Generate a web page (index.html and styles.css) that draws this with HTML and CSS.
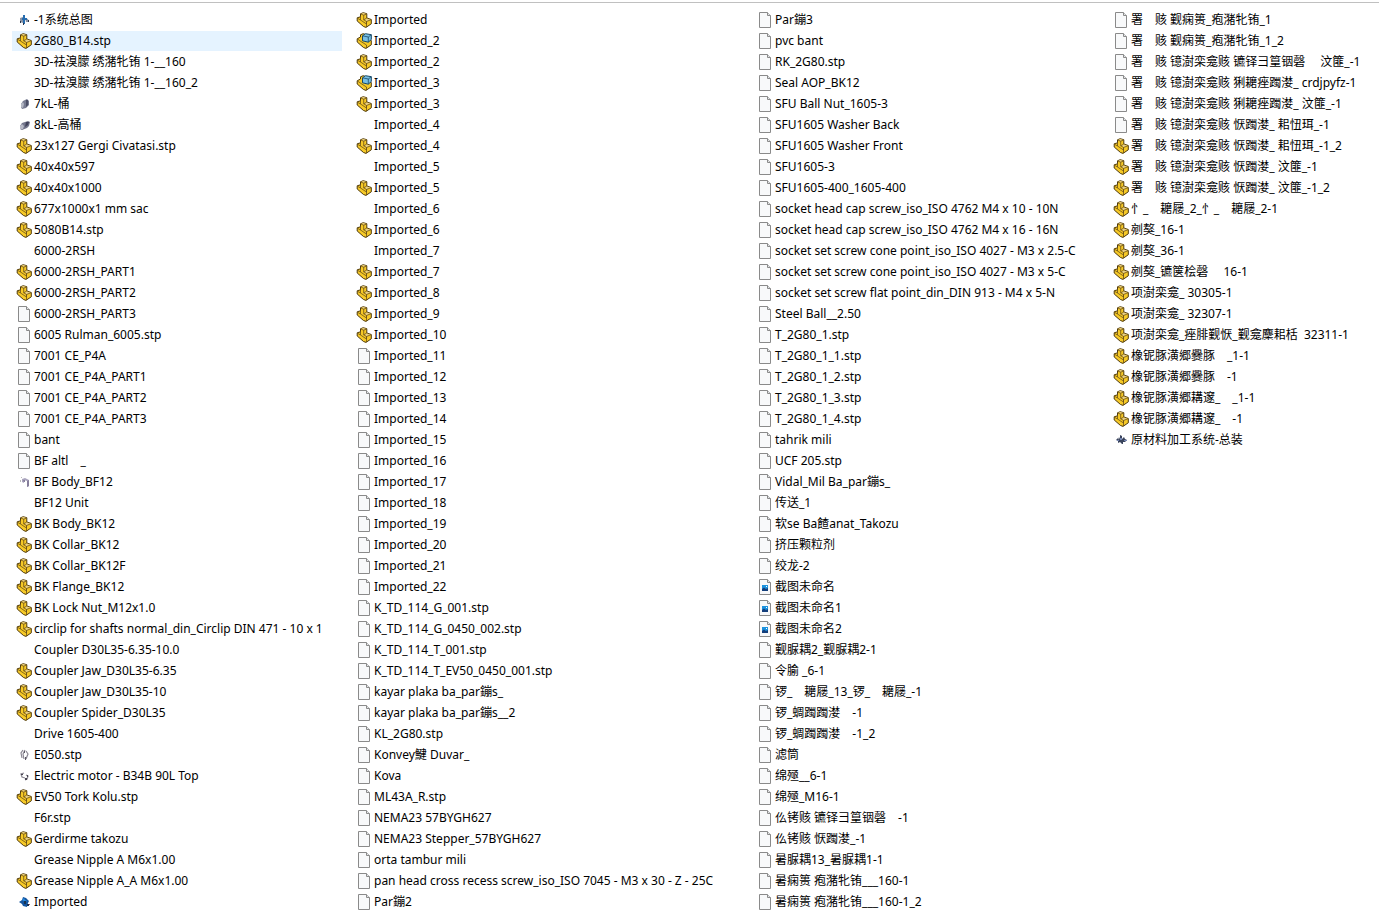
FILE: index.html
```
<!DOCTYPE html>
<html lang="zh-CN">
<head>
    <meta charset="UTF-8">
    <meta name="viewport" content="width=device-width, initial-scale=1.0">
    <title>Files</title>
    <link rel="stylesheet" href="styles.css">
</head>
<body>
    <!-- Icon sprite -->
    <svg class="sprite" aria-hidden="true">
        <symbol id="file" viewBox="0 0 16 16">
            <path d="M2.5 .5H10.500L13.500 3.500V15.500H2.500Z" fill="#f8f9fa" stroke="#8a8a8a"/>
            <path d="M10.500 .5V3.500H13.500" fill="#e4e6e8" stroke="#8a8a8a"/>
        </symbol>
        <symbol id="image" viewBox="0 0 16 16">
            <path d="M2.5 .5H10.500L13.500 3.500V15.500H2.500Z" fill="#f8f9fa" stroke="#8a8a8a"/>
            <path d="M10.500 .5V3.500H13.500" fill="#e4e6e8" stroke="#8a8a8a"/>
            <path d="M5 6H11V12H5Z" fill="#1c93df"/>
            <path d="M5 10L7 8.500L9 10L11 9V12H5Z" fill="#143f7c"/>
            <path d="M9 7H10V8H9Z" fill="#fff"/>
        </symbol>
        <symbol id="part" viewBox="0 0 16 16">
            <path d="M1.200 5.800L4.500 4.800V1.800L7.200 .7L10.800 1.700V6L15.300 7.500V11.800L10 15.400L7.500 14.500L1.200 9Z" fill="#f6c927" stroke="#4f3a0c" stroke-linejoin="round"/>
            <path d="M4.900 1.900L7.300 1.100L10.300 1.900L7.800 2.800ZM8 7.600L10.800 6.500L14.700 7.700L11 9.300Z" fill="#e8cf86"/>
            <path d="M4.500 4.800V8L10.500 12V9.500L7.700 7.800V3.200M10.500 9.500V15M7.700 3.200L4.700 2M7.700 3.200L10.600 2M10.500 9.500L15 7.700M7.700 7.800L10.600 6.200M1.400 6.200L4.500 8" fill="none" stroke="#6b5117" stroke-width=".8"/>
        </symbol>
        <symbol id="body" viewBox="0 0 16 16">
            <path d="M1.200 5.800L4.500 4V1.800L7.200 .7L11 2V6L15.300 7.500V11.800L10 15.400L7.500 14.500L1.200 9Z" fill="#f6c927" stroke="#4f3a0c" stroke-linejoin="round"/>
            <path d="M1.500 6L5 8.500L10.500 12V15" fill="none" stroke="#6b5117" stroke-width=".8"/>
            <path d="M6.500 2.800L9.500 .7L15.300 1.700V6.500L12.300 9.200L6.500 7.800Z" fill="#78bfe4" stroke="#174866" stroke-linejoin="round"/>
            <path d="M6.500 2.800L12.300 4V9M12.300 4L15.300 1.700" fill="none" stroke="#174866" stroke-width=".8"/>
        </symbol>
        <symbol id="assembly" viewBox="0 0 16 16">
            <path d="M4 6L7 5V11L4 10ZM9 6L12 7L13 10L10 10Z" fill="#8a92a2"/>
            <path d="M7 3H9V12H7ZM6 6H11V8H6Z" fill="#266caf"/>
            <path d="M4 9H5V11H4ZM12 8H13V10H12ZM7 11H8V13H7Z" fill="#2b354a"/>
        </symbol>
        <symbol id="plant" viewBox="0 0 16 16">
            <path d="M3 8L5 6V8L6 5L7 7V3L9 4V7L11 5L12 7L14 8L12 10H10V12H9L7 10L5 11V9Z" fill="#39435c"/>
            <path d="M7 6H9V8H7ZM11 8H14V9H11ZM4 8H6V9H4Z" fill="#7485b2"/>
        </symbol>
        <symbol id="barrel" viewBox="0 0 16 16">
            <path d="M5 8L7 5L11 3L13 5V9L10 12L6 13L5 11Z" fill="#777b91"/>
            <path d="M5 8L7 6L8 8L7 12L5 11Z" fill="#b4b8c4"/>
            <path d="M10 4L12 4V9L10 11Z" fill="#4b4e65"/>
        </symbol>
        <symbol id="tank" viewBox="0 0 16 16">
            <path d="M4 9L6 6L12 4L14 5L13 9L11 11L6 13L4 12Z" fill="#73768c"/>
            <path d="M4 9L6 7L8 9L7 12L4 12Z" fill="#b8bac7"/>
            <path d="M10 5L13 5L12 8L9 10Z" fill="#40425a"/>
        </symbol>
        <symbol id="bracket" viewBox="0 0 16 16">
            <path d="M6 5L9 4L13 6V12L11 13V7L8 6V9L6 8Z" fill="#aaa5be"/>
            <path d="M11 7L13 6V12L11 13ZM7 6H9V8H8Z" fill="#857e9b"/>
            <path d="M5 3H6V4H5ZM4 6H5V8H4Z" fill="#bbb"/>
        </symbol>
        <symbol id="ring" viewBox="0 0 16 16">
            <path d="M7 3L5 6L6 11M9 3L7 7L8 12M10 4L12 7L10 12" fill="none" stroke="#8b8793" stroke-width="1.200"/>
            <path d="M8 4H9V6H8ZM9 10H10V13H9Z" fill="#5c5864"/>
        </symbol>
        <symbol id="motor" viewBox="0 0 16 16">
            <path d="M8 5L5 6L6 9L9 10M10 7L12 8L11 11L9 12" fill="none" stroke="#8f8c96" stroke-width="1.300"/>
            <path d="M5 6H7V7H5ZM9 10H11V12H9ZM11 7H12V9H11Z" fill="#484450"/>
        </symbol>
        <symbol id="gear" viewBox="0 0 16 16">
            <path d="M3 8L6 6L7 3L10 4L13 7L12 9L11 13L7 12L6 10Z" fill="#1455a0"/>
            <path d="M6 6L8 4L9 6L11 7L9 8Z" fill="#278ade"/>
            <path d="M8 7H10V10H8ZM11 10H13V12H11Z" fill="#173250"/>
            <path d="M13 10H14V11H13Z" fill="#b65a5a"/>
        </symbol>
    </svg>

    <main class="files">
        <ul class="column">
            <li><svg><use href="#assembly"/></svg>-1系统总图</li>
            <li class="active"><svg><use href="#part"/></svg>2G80_B14.stp</li>
            <li><svg></svg>3D-祛溴朦 绣潴牝铕 1-__160</li>
            <li><svg></svg>3D-祛溴朦 绣潴牝铕 1-__160_2</li>
            <li><svg><use href="#barrel"/></svg>7kL-桶</li>
            <li><svg><use href="#tank"/></svg>8kL-高桶</li>
            <li><svg><use href="#part"/></svg>23x127 Gergi Civatasi.stp</li>
            <li><svg><use href="#part"/></svg>40x40x597</li>
            <li><svg><use href="#part"/></svg>40x40x1000</li>
            <li><svg><use href="#part"/></svg>677x1000x1 mm sac</li>
            <li><svg><use href="#part"/></svg>5080B14.stp</li>
            <li><svg></svg>6000-2RSH</li>
            <li><svg><use href="#part"/></svg>6000-2RSH_PART1</li>
            <li><svg><use href="#part"/></svg>6000-2RSH_PART2</li>
            <li><svg><use href="#file"/></svg>6000-2RSH_PART3</li>
            <li><svg><use href="#file"/></svg>6005 Rulman_6005.stp</li>
            <li><svg><use href="#file"/></svg>7001 CE_P4A</li>
            <li><svg><use href="#file"/></svg>7001 CE_P4A_PART1</li>
            <li><svg><use href="#file"/></svg>7001 CE_P4A_PART2</li>
            <li><svg><use href="#file"/></svg>7001 CE_P4A_PART3</li>
            <li><svg><use href="#file"/></svg>bant</li>
            <li><svg><use href="#file"/></svg>BF altl　_</li>
            <li><svg><use href="#bracket"/></svg>BF Body_BF12</li>
            <li><svg></svg>BF12 Unit</li>
            <li><svg><use href="#part"/></svg>BK Body_BK12</li>
            <li><svg><use href="#part"/></svg>BK Collar_BK12</li>
            <li><svg><use href="#part"/></svg>BK Collar_BK12F</li>
            <li><svg><use href="#part"/></svg>BK Flange_BK12</li>
            <li><svg><use href="#part"/></svg>BK Lock Nut_M12x1.0</li>
            <li><svg><use href="#part"/></svg>circlip for shafts normal_din_Circlip DIN 471 - 10 x 1</li>
            <li><svg></svg>Coupler D30L35-6.35-10.0</li>
            <li><svg><use href="#part"/></svg>Coupler Jaw_D30L35-6.35</li>
            <li><svg><use href="#part"/></svg>Coupler Jaw_D30L35-10</li>
            <li><svg><use href="#part"/></svg>Coupler Spider_D30L35</li>
            <li><svg></svg>Drive 1605-400</li>
            <li><svg><use href="#ring"/></svg>E050.stp</li>
            <li><svg><use href="#motor"/></svg>Electric motor - B34B 90L Top</li>
            <li><svg><use href="#part"/></svg>EV50 Tork Kolu.stp</li>
            <li><svg></svg>F6r.stp</li>
            <li><svg><use href="#part"/></svg>Gerdirme takozu</li>
            <li><svg></svg>Grease Nipple A M6x1.00</li>
            <li><svg><use href="#part"/></svg>Grease Nipple A_A M6x1.00</li>
            <li><svg><use href="#gear"/></svg>Imported</li>
        </ul>

        <ul class="column">
            <li><svg><use href="#part"/></svg>Imported</li>
            <li><svg><use href="#body"/></svg>Imported_2</li>
            <li><svg><use href="#part"/></svg>Imported_2</li>
            <li><svg><use href="#body"/></svg>Imported_3</li>
            <li><svg><use href="#part"/></svg>Imported_3</li>
            <li><svg></svg>Imported_4</li>
            <li><svg><use href="#part"/></svg>Imported_4</li>
            <li><svg></svg>Imported_5</li>
            <li><svg><use href="#part"/></svg>Imported_5</li>
            <li><svg></svg>Imported_6</li>
            <li><svg><use href="#part"/></svg>Imported_6</li>
            <li><svg></svg>Imported_7</li>
            <li><svg><use href="#part"/></svg>Imported_7</li>
            <li><svg><use href="#part"/></svg>Imported_8</li>
            <li><svg><use href="#part"/></svg>Imported_9</li>
            <li><svg><use href="#part"/></svg>Imported_10</li>
            <li><svg><use href="#file"/></svg>Imported_11</li>
            <li><svg><use href="#file"/></svg>Imported_12</li>
            <li><svg><use href="#file"/></svg>Imported_13</li>
            <li><svg><use href="#file"/></svg>Imported_14</li>
            <li><svg><use href="#file"/></svg>Imported_15</li>
            <li><svg><use href="#file"/></svg>Imported_16</li>
            <li><svg><use href="#file"/></svg>Imported_17</li>
            <li><svg><use href="#file"/></svg>Imported_18</li>
            <li><svg><use href="#file"/></svg>Imported_19</li>
            <li><svg><use href="#file"/></svg>Imported_20</li>
            <li><svg><use href="#file"/></svg>Imported_21</li>
            <li><svg><use href="#file"/></svg>Imported_22</li>
            <li><svg><use href="#file"/></svg>K_TD_114_G_001.stp</li>
            <li><svg><use href="#file"/></svg>K_TD_114_G_0450_002.stp</li>
            <li><svg><use href="#file"/></svg>K_TD_114_T_001.stp</li>
            <li><svg><use href="#file"/></svg>K_TD_114_T_EV50_0450_001.stp</li>
            <li><svg><use href="#file"/></svg>kayar plaka ba_par鏰s_</li>
            <li><svg><use href="#file"/></svg>kayar plaka ba_par鏰s__2</li>
            <li><svg><use href="#file"/></svg>KL_2G80.stp</li>
            <li><svg><use href="#file"/></svg>Konvey鰎 Duvar_</li>
            <li><svg><use href="#file"/></svg>Kova</li>
            <li><svg><use href="#file"/></svg>ML43A_R.stp</li>
            <li><svg><use href="#file"/></svg>NEMA23 57BYGH627</li>
            <li><svg><use href="#file"/></svg>NEMA23 Stepper_57BYGH627</li>
            <li><svg><use href="#file"/></svg>orta tambur mili</li>
            <li><svg><use href="#file"/></svg>pan head cross recess screw_iso_ISO 7045 - M3 x 30 - Z - 25C</li>
            <li><svg><use href="#file"/></svg>Par鏰2</li>
        </ul>

        <ul class="column">
            <li><svg><use href="#file"/></svg>Par鏰3</li>
            <li><svg><use href="#file"/></svg>pvc bant</li>
            <li><svg><use href="#file"/></svg>RK_2G80.stp</li>
            <li><svg><use href="#file"/></svg>Seal AOP_BK12</li>
            <li><svg><use href="#file"/></svg>SFU Ball Nut_1605-3</li>
            <li><svg><use href="#file"/></svg>SFU1605 Washer Back</li>
            <li><svg><use href="#file"/></svg>SFU1605 Washer Front</li>
            <li><svg><use href="#file"/></svg>SFU1605-3</li>
            <li><svg><use href="#file"/></svg>SFU1605-400_1605-400</li>
            <li><svg><use href="#file"/></svg>socket head cap screw_iso_ISO 4762 M4 x 10 - 10N</li>
            <li><svg><use href="#file"/></svg>socket head cap screw_iso_ISO 4762 M4 x 16 - 16N</li>
            <li><svg><use href="#file"/></svg>socket set screw cone point_iso_ISO 4027 - M3 x 2.5-C</li>
            <li><svg><use href="#file"/></svg>socket set screw cone point_iso_ISO 4027 - M3 x 5-C</li>
            <li><svg><use href="#file"/></svg>socket set screw flat point_din_DIN 913 - M4 x 5-N</li>
            <li><svg><use href="#file"/></svg>Steel Ball__2.50</li>
            <li><svg><use href="#file"/></svg>T_2G80_1.stp</li>
            <li><svg><use href="#file"/></svg>T_2G80_1_1.stp</li>
            <li><svg><use href="#file"/></svg>T_2G80_1_2.stp</li>
            <li><svg><use href="#file"/></svg>T_2G80_1_3.stp</li>
            <li><svg><use href="#file"/></svg>T_2G80_1_4.stp</li>
            <li><svg><use href="#file"/></svg>tahrik mili</li>
            <li><svg><use href="#file"/></svg>UCF 205.stp</li>
            <li><svg><use href="#file"/></svg>Vidal_Mil Ba_par鏰s_</li>
            <li><svg><use href="#file"/></svg>传送_1</li>
            <li><svg><use href="#file"/></svg>软se Ba餷anat_Takozu</li>
            <li><svg><use href="#file"/></svg>挤压颗粒剂</li>
            <li><svg><use href="#file"/></svg>绞龙-2</li>
            <li><svg><use href="#image"/></svg>截图未命名</li>
            <li><svg><use href="#image"/></svg>截图未命名1</li>
            <li><svg><use href="#image"/></svg>截图未命名2</li>
            <li><svg><use href="#file"/></svg>觐脲耦2_觐脲耦2-1</li>
            <li><svg><use href="#file"/></svg>令腧 _6-1</li>
            <li><svg><use href="#file"/></svg>锣_　耱屦_13_锣_　耱屦_-1</li>
            <li><svg><use href="#file"/></svg>锣_蜩躅躅漤　-1</li>
            <li><svg><use href="#file"/></svg>锣_蜩躅躅漤　-1_2</li>
            <li><svg><use href="#file"/></svg>滤筒</li>
            <li><svg><use href="#file"/></svg>绵殛__6-1</li>
            <li><svg><use href="#file"/></svg>绵殛_M16-1</li>
            <li><svg><use href="#file"/></svg>仫铐赅 镳铎彐篁铟磬　-1</li>
            <li><svg><use href="#file"/></svg>仫铐赅 恹躅漤_-1</li>
            <li><svg><use href="#file"/></svg>暑脲耦13_暑脲耦1-1</li>
            <li><svg><use href="#file"/></svg>暑痫篑 疱潴牝铕___160-1</li>
            <li><svg><use href="#file"/></svg>暑痫篑 疱潴牝铕___160-1_2</li>
        </ul>

        <ul class="column">
            <li><svg><use href="#file"/></svg>署　赅 觐痫篑_疱潴牝铕_1</li>
            <li><svg><use href="#file"/></svg>署　赅 觐痫篑_疱潴牝铕_1_2</li>
            <li><svg><use href="#file"/></svg>署　赅 镱澍栾龛赅 镳铎彐篁铟磬　 汶篚_-1</li>
            <li><svg><use href="#file"/></svg>署　赅 镱澍栾龛赅 猁耱痤躅漤_ crdjpyfz-1</li>
            <li><svg><use href="#file"/></svg>署　赅 镱澍栾龛赅 猁耱痤躅漤_ 汶篚_-1</li>
            <li><svg><use href="#file"/></svg>署　赅 镱澍栾龛赅 恹躅漤_ 耜忸珥_-1</li>
            <li><svg><use href="#part"/></svg>署　赅 镱澍栾龛赅 恹躅漤_ 耜忸珥_-1_2</li>
            <li><svg><use href="#part"/></svg>署　赅 镱澍栾龛赅 恹躅漤_ 汶篚_-1</li>
            <li><svg><use href="#part"/></svg>署　赅 镱澍栾龛赅 恹躅漤_ 汶篚_-1_2</li>
            <li><svg><use href="#part"/></svg>忄_　耱屦_2_忄_　耱屦_2-1</li>
            <li><svg><use href="#part"/></svg>剜獒_16-1</li>
            <li><svg><use href="#part"/></svg>剜獒_36-1</li>
            <li><svg><use href="#part"/></svg>剜獒_镳箧桧磬　 16-1</li>
            <li><svg><use href="#part"/></svg>项澍栾龛_ 30305-1</li>
            <li><svg><use href="#part"/></svg>项澍栾龛_ 32307-1</li>
            <li><svg><use href="#part"/></svg>项澍栾龛_痤腓觐恹_觐龛麇耜栝  32311-1</li>
            <li><svg><use href="#part"/></svg>橡铌豚潢郷爨豚　_1-1</li>
            <li><svg><use href="#part"/></svg>橡铌豚潢郷爨豚　-1</li>
            <li><svg><use href="#part"/></svg>橡铌豚潢郷耩邃_　_1-1</li>
            <li><svg><use href="#part"/></svg>橡铌豚潢郷耩邃_　-1</li>
            <li><svg><use href="#plant"/></svg>原材料加工系统-总装</li>
        </ul>
    </main>
</body>
</html>
```
FILE: styles.css
```
body {
    margin: 0;
    padding-top: 2px;
    background-color: #fff;
    color: #000;
    font-family: "Noto Sans", "Noto Sans CJK SC", sans-serif;
    font-size: 12px;
    line-height: 20px;
}

.sprite {
    display: none;
}

.files {
    display: grid;
    grid-template-columns: minmax(0, 340fr) minmax(0, 401fr) minmax(0, 356fr) minmax(0, 270fr);
    padding: 7px 0 12px 12px;
    border-top: 1px solid #c0c0c0;
}

.column {
    display: flex;
    flex-direction: column;
    gap: 1px;
    margin: 0;
    padding: 0;
    list-style: none;
}

.column li {
    display: flex;
    align-items: center;
    gap: 2px;
    height: 20px;
    margin-right: 10px;
    padding-left: 4px;
    white-space: pre;
}

.column li:hover,
.column .active {
    background-color: #e5f3ff;
}

.column svg {
    flex: none;
    width: 16px;
    height: 16px;
}
```
